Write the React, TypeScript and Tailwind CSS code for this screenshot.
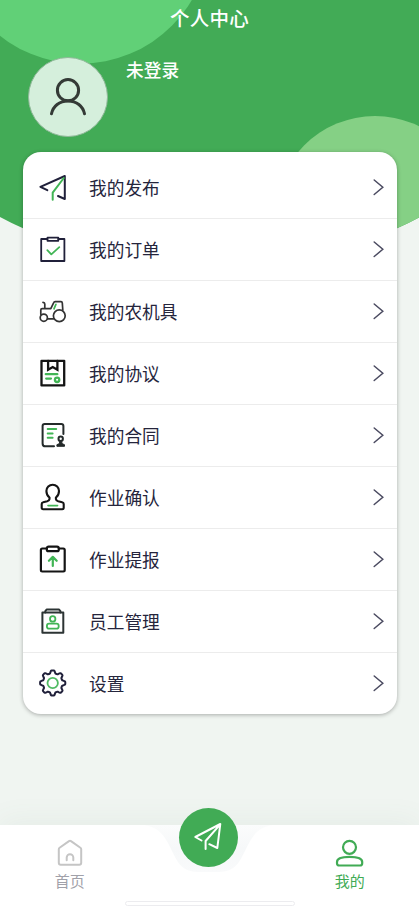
import React from "react";

const INK = "#20203a";
const BLACK = "#141414";
const GREEN = "#41b555";

const gearPath =
  Array.from({ length: 96 }, (_, i) => {
    const a = (i / 96) * Math.PI * 2;
    const wave = Math.max(-1, Math.min(1, Math.cos(a * 8) * 1.7));
    const r = 11.2 + wave * 1.4;
    return `${i ? "L" : "M"}${(15.7 + r * Math.sin(a)).toFixed(2)} ${(15 - r * Math.cos(a)).toFixed(2)}`;
  }).join("") + "Z";

const Icon = ({
  children,
  color = INK,
  width = 2,
}: {
  children: React.ReactNode;
  color?: string;
  width?: number;
}) => (
  <svg
    viewBox="0 0 32 32"
    className="mt-px h-8 w-8 shrink-0"
    fill="none"
    stroke={color}
    strokeWidth={width}
    strokeLinecap="round"
    strokeLinejoin="round"
  >
    {children}
  </svg>
);

const menu = [
  {
    label: "我的发布",
    icon: (
      <Icon>
        <path d="M10.3 18.2 3.4 14.8 27.8 4V27L21 24" />
        <path d="M26.8 6 15.7 20.7V27.8" stroke={GREEN} />
      </Icon>
    ),
  },
  {
    label: "我的订单",
    icon: (
      <Icon width={1.8}>
        <path d="M10.3 5H4.2V27H27.4V5H21.4" />
        <path d="M10.5 3.6H21.3V6.8H10.5Z" />
        <path d="M10.3 16.2 14.3 20.4 22.3 13.2" stroke={GREEN} />
      </Icon>
    ),
  },
  {
    label: "我的农机具",
    icon: (
      <Icon color="#333" width={1.7}>
        <circle cx="6.8" cy="21.7" r="3.6" />
        <circle cx="22.3" cy="19.8" r="5.9" />
        <path d="M6 6.3Q7.8 6.5 7.8 8V12.4M3.8 18.3V14Q3.8 12.6 5.2 12.6H13.8L16.6 6.8Q17 5.7 18.2 5.7H24Q25.2 5.7 25.3 7L25.8 14M10.6 22.9H16.8" />
        <path d="M18.9 8.4 17 12.8" stroke={GREEN} />
      </Icon>
    ),
  },
  {
    label: "我的协议",
    icon: (
      <Icon color={BLACK} width={2.3}>
        <path d="M4.5 2.8H27.2V27.4H4.5Z" />
        <path d="M11.1 3V11.8L15.7 9 20.4 11.8V3" strokeLinejoin="miter" />
        <g stroke={GREEN}>
          <path d="M8.8 16.2H20.3M9.2 20.6H14" />
          <circle cx="20.1" cy="21.8" r="2.2" />
        </g>
      </Icon>
    ),
  },
  {
    label: "我的合同",
    icon: (
      <Icon color="#242a2a" width={2}>
        <path d="M17 26.3H8.5Q5.6 26.3 5.6 23.4V6Q5.6 4 7.7 4H24.3Q26.4 4 26.4 6V14" />
        <path d="M10.7 9H19.2M10.7 13.4H15.6M10.7 17.8H15.6" stroke={GREEN} />
        <circle cx="23.7" cy="18.8" r="2.2" />
        <path d="M22.7 21.2H24.7L25 23.6L27.5 24.7V26.3H19.9V24.7L22.4 23.6Z" fill="#242a2a" strokeWidth="1" />
      </Icon>
    ),
  },
  {
    label: "作业确认",
    icon: (
      <Icon color={BLACK} width={2.1}>
        <path d="M12.5 15.5Q9.4 13.3 9.4 9A6.3 6.3 0 0 1 22 9Q22 13.3 18.9 15.5V17Q19.2 18.8 21.2 19.3L25.2 20.2Q26.7 20.5 26.7 22V25.8Q26.7 27.2 25.3 27.2H6.1Q4.7 27.2 4.7 25.8V22Q4.7 20.5 6.2 20.2L10.2 19.3Q12.2 18.8 12.5 17Z" />
        <path d="M11 23.6H20.6" stroke={GREEN} strokeWidth="1.6" />
      </Icon>
    ),
  },
  {
    label: "作业提报",
    icon: (
      <Icon color={BLACK} width={2.2}>
        <path d="M9.7 4.5H5.3Q3.9 4.5 3.9 5.9V26.1Q3.9 27.5 5.3 27.5H26.3Q27.7 27.5 27.7 26.1V5.9Q27.7 4.5 26.3 4.5H21.8" />
        <rect x="9.8" y="2.6" width="12" height="4.6" rx="1.8" />
        <path d="M15.8 21.9V13.5M11.9 16.8 15.8 12.9 19.7 16.8" stroke={GREEN} />
      </Icon>
    ),
  },
  {
    label: "员工管理",
    icon: (
      <Icon color="#2c3434" width={2}>
        <path d="M5.4 6.6H26.3V26.7H5.4Z" />
        <path d="M8.3 6.5V5.1L9.8 3.4H21.9L23.4 5.1V6.5" />
        <g stroke={GREEN} strokeWidth="1.8">
          <circle cx="15.7" cy="12.9" r="2.7" />
          <rect x="9.9" y="17.7" width="11.8" height="5" rx="2.2" />
        </g>
      </Icon>
    ),
  },
  {
    label: "设置",
    icon: (
      <Icon>
        <path d={gearPath} />
        <circle cx="15.7" cy="15" r="5.2" stroke="#50bb63" strokeWidth="1.8" />
      </Icon>
    ),
  },
];

const Header = () => (
  <svg viewBox="0 0 419 260" className="absolute inset-x-0 top-0 h-[260px] w-[419px]">
    <defs>
      <clipPath id="curve">
        <path d="M0 0H419V217.5Q398 229 374 237Q209 280 46 237Q22 229 0 217Z" />
      </clipPath>
    </defs>
    <g clipPath="url(#curve)">
      <rect width="419" height="260" fill="#42ab56" />
      <circle cx="80.3" cy="-65.8" r="129.5" fill="#61d077" />
      <circle cx="375" cy="216" r="100" fill="#85d085" />
    </g>
  </svg>
);

const TabBar = () => (
  <nav className="relative h-[81px] shadow-[0_-6px_28px_rgba(90,120,105,0.06)]">
    <svg viewBox="0 0 419 81" className="absolute inset-0 h-[81px] w-[419px]">
      <defs>
        <linearGradient id="notch" x1="0" x2="0" y1="0" y2="1">
          <stop offset="0" stopColor="#fbfcfc" />
          <stop offset="0.5" stopColor="#f6f8f9" />
          <stop offset="1" stopColor="#f9fafb" />
        </linearGradient>
      </defs>
      <rect width="419" height="81" fill="#fff" />
      <path
        d="M144 0C158 2 163 9 168 18C176 33 179 47 198 47H219C238 47 241 33 249 18C254 9 259 2 273 0Z"
        fill="url(#notch)"
      />
    </svg>
    <div className="relative grid grid-cols-3 pt-3">
      <div className="flex flex-col items-center text-[15px] leading-5 text-[#a1a1a9]">
        <svg viewBox="0 0 32 32" className="h-8 w-8" fill="none" stroke="#c5c5c5" strokeWidth="2" strokeLinecap="round" strokeLinejoin="round">
          <path d="M4.8 12.2Q4.8 11.3 5.6 10.7L15 4.1Q16 3.5 17 4.1L26.4 10.7Q27.2 11.3 27.2 12.2V25.8Q27.2 27.7 25.3 27.7H6.7Q4.8 27.7 4.8 25.8Z" />
          <path d="M12.7 23.3V20.5A3.3 3.3 0 0 1 19.3 20.5V23.3" />
        </svg>
        <span className="mt-0.5">首页</span>
      </div>
      <div />
      <div className="flex flex-col items-center text-[15px] leading-5 text-[#41ab55]">
        <svg viewBox="0 0 32 32" className="h-8 w-8" fill="none" stroke="#41ab55" strokeWidth="2.2" strokeLinejoin="round">
          <circle cx="16.5" cy="10.3" r="6.5" />
          <path d="M4 26.2V25C4 21.4 9.5 19.8 16.5 19.8S29.2 21.4 29.2 25V26.2Q29.2 28.5 26.9 28.5H6.3Q4 28.5 4 26.2Z" />
        </svg>
        <span className="ml-px mt-0.5">我的</span>
      </div>
    </div>
    <button className="absolute left-[179px] top-[-17px] h-[59px] w-[59px] rounded-full bg-[#41ab55]">
      <svg viewBox="0 0 59 59" className="h-[59px] w-[59px]" fill="none" stroke="#fff" strokeWidth="2" strokeLinecap="round" strokeLinejoin="round">
        <path d="M22.5 32.5 16.3 29 41.3 16 38.3 40 30.3 36.2M40.8 16.8 26.6 33V41" />
      </svg>
    </button>
    <div className="absolute left-[125px] top-[76px] h-[5px] w-[170px] rounded-full border border-[#ececef] bg-white" />
  </nav>
);

const App = () => {
  return (
    <div className="relative flex h-[906px] w-[419px] flex-col overflow-hidden bg-[#f0f5f1] font-['Noto_Sans_CJK_SC',sans-serif]">
      <Header />
      <header className="relative h-[152px] shrink-0 text-white">
        <h1 className="pt-1 text-center text-[19.5px] font-medium leading-7 tracking-[0.3px]">
          个人中心
        </h1>
        <div className="flex items-start pl-7 pt-[25px]">
          <div className="flex h-20 w-20 items-center justify-center rounded-full border border-[#91b99a] bg-[#d5efdc]">
            <svg viewBox="0 0 40 40" className="h-10 w-10" fill="none" stroke="#343a36" strokeWidth="3" strokeLinecap="round">
              <circle cx="20" cy="13.2" r="10.6" />
              <path d="M3.5 36.8C5 29.2 11.5 23.9 20 23.9S35 29.2 36.5 36.8" />
            </svg>
          </div>
          <span className="ml-[18px] text-[17.7px] font-medium leading-6">未登录</span>
        </div>
      </header>
      <main className="relative mx-[22.5px] h-[562px] shrink-0 rounded-[18px] bg-white pt-[5.4px] shadow-[0_1px_4px_rgba(0,0,0,0.3)]">
        {menu.map((item) => (
          <div
            key={item.label}
            className="flex h-[61.9px] items-center border-b border-[#ececec] pl-[14.5px] pr-[13px] last:border-b-0"
          >
            {item.icon}
            <span className="-mt-px ml-5 grow text-[17.7px] leading-6 text-[#25253c]">{item.label}</span>
            <svg viewBox="0 0 12 18" className="-mt-px h-[18px] w-3" fill="none" stroke="#4b4b61" strokeWidth="1.5" strokeLinecap="round">
              <path d="M2.2 2 10.8 9.2 2.2 16.5" />
            </svg>
          </div>
        ))}
      </main>
      <div className="grow" />
      <TabBar />
    </div>
  );
};

export default App;
